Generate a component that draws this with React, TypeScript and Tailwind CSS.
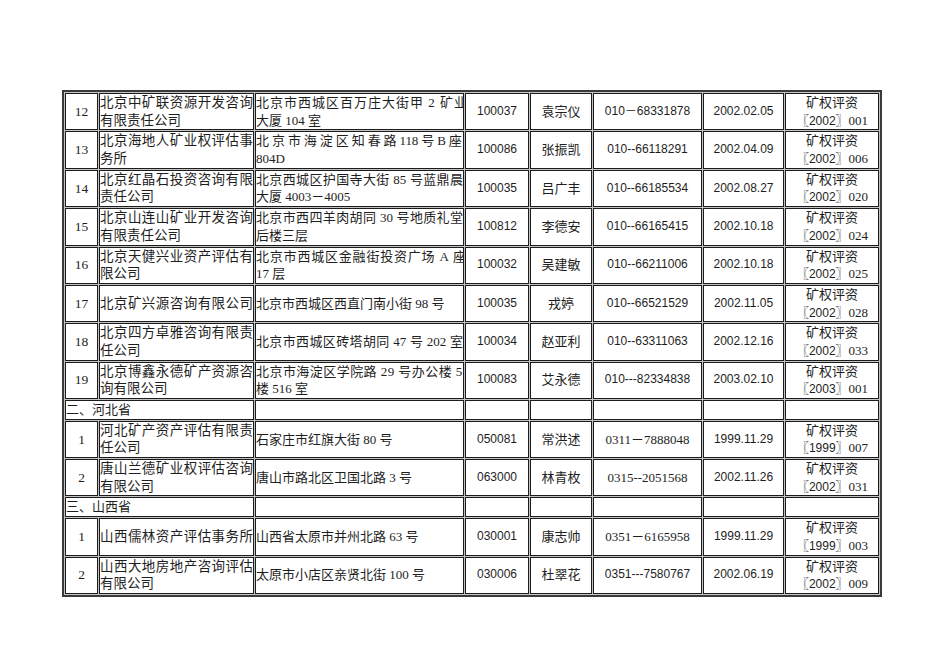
import React from "react";

type Line = { t: string; mode?: "j" | "o" | "n"; ls?: number };
type Row =
  | {
      kind: "data";
      n: string;
      co: Line[];
      addr: Line[];
      zip: string;
      name: string;
      phone: string;
      phoneSerif?: boolean;
      date: string;
      licYear: string;
      licNo: string;
    }
  | { kind: "section"; title: string };

const L = (t: string, mode: "j" | "o" | "n" = "n", ls = 0): Line => ({ t, mode, ls });

const rows: Row[] = [
  { kind: "data", n: "12", co: [L("北京中矿联资源开发咨询", "j"), L("有限责任公司")], addr: [L("北京市西城区百万庄大街甲 2 矿业", "o", 1), L("大厦 104 室")], zip: "100037", name: "袁宗仪", phone: "010－68331878", date: "2002.02.05", licYear: "2002", licNo: "001" },
  { kind: "data", n: "13", co: [L("北京海地人矿业权评估事", "j"), L("务所")], addr: [L("北 京 市 海 淀 区 知 春 路 118 号 B 座", "o", -0.15), L("804D")], zip: "100086", name: "张振凯", phone: "010--66118291", date: "2002.04.09", licYear: "2002", licNo: "006" },
  { kind: "data", n: "14", co: [L("北京红晶石投资咨询有限", "j"), L("责任公司")], addr: [L("北京西城区护国寺大街 85 号蓝鼎晨", "j"), L("大厦 4003－4005")], zip: "100035", name: "吕广丰", phone: "010--66185534", date: "2002.08.27", licYear: "2002", licNo: "020" },
  { kind: "data", n: "15", co: [L("北京山连山矿业开发咨询", "j"), L("有限责任公司")], addr: [L("北京市西四羊肉胡同 30 号地质礼堂", "j"), L("后楼三层")], zip: "100812", name: "李德安", phone: "010--66165415", date: "2002.10.18", licYear: "2002", licNo: "024" },
  { kind: "data", n: "16", co: [L("北京天健兴业资产评估有", "j"), L("限公司")], addr: [L("北京市西城区金融街投资广场 A 座", "o", 0.8), L("17 层")], zip: "100032", name: "吴建敏", phone: "010--66211006", date: "2002.10.18", licYear: "2002", licNo: "025" },
  { kind: "data", n: "17", co: [L("北京矿兴源咨询有限公司", "j")], addr: [L("北京市西城区西直门南小街 98 号")], zip: "100035", name: "戎婷", phone: "010--66521529", date: "2002.11.05", licYear: "2002", licNo: "028" },
  { kind: "data", n: "18", co: [L("北京四方卓雅咨询有限责", "j"), L("任公司")], addr: [L("北京市西城区砖塔胡同 47 号 202 室", "j")], zip: "100034", name: "赵亚利", phone: "010--63311063", date: "2002.12.16", licYear: "2002", licNo: "033" },
  { kind: "data", n: "19", co: [L("北京博鑫永德矿产资源咨", "j"), L("询有限公司")], addr: [L("北京市海淀区学院路 29 号办公楼 5", "o", 0.45), L("楼 516 室")], zip: "100083", name: "艾永德", phone: "010---82334838", date: "2003.02.10", licYear: "2003", licNo: "001" },
  { kind: "section", title: "二、河北省" },
  { kind: "data", n: "1", co: [L("河北矿产资产评估有限责", "j"), L("任公司")], addr: [L("石家庄市红旗大街 80 号")], zip: "050081", name: "常洪述", phone: "0311－7888048", phoneSerif: true, date: "1999.11.29", licYear: "1999", licNo: "007" },
  { kind: "data", n: "2", co: [L("唐山兰德矿业权评估咨询", "j"), L("有限公司")], addr: [L("唐山市路北区卫国北路 3 号")], zip: "063000", name: "林青枚", phone: "0315--2051568", phoneSerif: true, date: "2002.11.26", licYear: "2002", licNo: "031" },
  { kind: "section", title: "三、山西省" },
  { kind: "data", n: "1", co: [L("山西儒林资产评估事务所", "j")], addr: [L("山西省太原市并州北路 63 号")], zip: "030001", name: "康志帅", phone: "0351－6165958", phoneSerif: true, date: "1999.11.29", licYear: "1999", licNo: "003" },
  { kind: "data", n: "2", co: [L("山西大地房地产咨询评估", "j"), L("有限公司")], addr: [L("太原市小店区亲贤北街 100 号")], zip: "030006", name: "杜翠花", phone: "0351---7580767", date: "2002.06.19", licYear: "2002", licNo: "009" },
];

const serif = "font-['Liberation_Serif','Noto_Sans_CJK_SC',serif]";
const sans = "font-['Liberation_Sans','Noto_Sans_CJK_SC',sans-serif]";
const cell = "border border-[#1c1c1c] bg-white p-0 align-middle";
const ln = "h-[17.7px] leading-[17.7px] overflow-hidden";

function Lines({ lines }: { lines: Line[] }) {
  return (
    <>
      {lines.map((l, i) => {
        if (l.mode === "j")
          return (
            <div key={i} className={`${ln} text-justify [text-align-last:justify]`}>
              {l.t}
            </div>
          );
        if (l.mode === "o")
          return (
            <div key={i} className={`${ln} whitespace-nowrap`} style={{ letterSpacing: `${l.ls}px` }}>
              {l.t}
            </div>
          );
        return (
          <div key={i} className={`${ln} whitespace-nowrap`}>
            {l.t}
          </div>
        );
      })}
    </>
  );
}

export default function App() {
  return (
    <div className="w-[950px] h-[672px] bg-white pt-[90px] pl-[62px] text-[#1e1e1e]">
      <table
        className={`table-fixed w-[820px] border-separate border-spacing-px border-2 border-[#3a3a3a] bg-[#c4c4c4] ${serif} text-[13px] leading-[17.7px]`}
      >
        <colgroup>
          <col className="w-[33px]" />
          <col className="w-[155px]" />
          <col className="w-[209px]" />
          <col className="w-[64px]" />
          <col className="w-[62px]" />
          <col className="w-[109px]" />
          <col className="w-[81px]" />
          <col className="w-[94px]" />
        </colgroup>
        <tbody>
          {rows.map((r, idx) => {
            if (r.kind === "section") {
              return (
                <tr key={idx}>
                  <td colSpan={2} className={`${cell} text-left`}>
                    <div className={ln}>{r.title}</div>
                  </td>
                  <td className={cell}></td>
                  <td className={cell}></td>
                  <td className={cell}></td>
                  <td className={cell}></td>
                  <td className={cell}></td>
                  <td className={cell}></td>
                </tr>
              );
            }
            return (
              <tr key={idx}>
                <td className={`${cell} text-center text-[13.5px]`}>
                  <div className={ln}>{r.n}</div>
                </td>
                <td className={`${cell} text-[13.5px]`}>
                  <Lines lines={r.co} />
                </td>
                <td className={cell}>
                  <Lines lines={r.addr} />
                </td>
                <td className={`${cell} text-center ${sans} text-[12px]`}>
                  <div className={ln}>{r.zip}</div>
                </td>
                <td className={`${cell} text-center text-[13px]`}>
                  <div className={ln}>{r.name}</div>
                </td>
                <td className={`${cell} text-center whitespace-nowrap ${r.phoneSerif ? "text-[13px]" : `${sans} text-[12px]`}`}>
                  <div className={ln}>{r.phone}</div>
                </td>
                <td className={`${cell} text-center ${sans} text-[12px]`}>
                  <div className={ln}>{r.date}</div>
                </td>
                <td className={`${cell} text-center whitespace-nowrap`}>
                  <div className={ln}>矿权评资</div>
                  <div className={ln}>
                    〖<span className={`${sans} text-[12px]`}>{r.licYear}</span>〗{r.licNo}
                  </div>
                </td>
              </tr>
            );
          })}
        </tbody>
      </table>
    </div>
  );
}
